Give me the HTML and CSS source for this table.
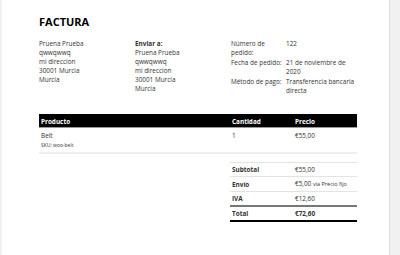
FILE: index.html
```html
<!DOCTYPE html>
<html lang="es">
<head>
<meta charset="utf-8">
<title>Factura</title>
<link rel="stylesheet" href="styles.css">
</head>
<body>
<div class="page">
  <h1 class="title">FACTURA</h1>
  <div class="addresses">
    <div class="addr">
      <div>Pruena Prueba</div>
      <div>qwwqwwq</div>
      <div>mi direccion</div>
      <div>30001 Murcia</div>
      <div>Murcia</div>
    </div>
    <div class="addr">
      <div class="label">Enviar a:</div>
      <div>Pruena Prueba</div>
      <div>qwwqwwq</div>
      <div>mi direccion</div>
      <div>30001 Murcia</div>
      <div>Murcia</div>
    </div>
    <div class="order">
      <div class="k">Número de pedido:</div><div class="v">122</div>
      <div class="k">Fecha de pedido:</div><div class="v">21 de noviembre de 2020</div>
      <div class="k">Método de pago:</div><div class="v">Transferencia bancaria directa</div>
    </div>
  </div>

  <table class="items">
    <thead>
      <tr><th class="c-prod">Producto</th><th class="c-qty">Cantidad</th><th class="c-price">Precio</th></tr>
    </thead>
    <tbody>
      <tr>
        <td class="c-prod"><div class="name">Belt</div><div class="sku">SKU: woo-belt</div></td>
        <td class="c-qty">1</td>
        <td class="c-price">€55,00</td>
      </tr>
    </tbody>
  </table>

  <div class="totals-wrap">
    <table class="totals">
      <tr><th>Subtotal</th><td>€55,00</td></tr>
      <tr><th>Envío</th><td>€5,00 <small>vía Precio fijo</small></td></tr>
      <tr class="tax"><th>IVA</th><td>€12,60</td></tr>
      <tr class="total"><th>Total</th><td><strong>€72,60</strong></td></tr>
    </table>
  </div>
</div>
</body>
</html>
```

FILE: styles.css
```css
html, body {
  margin: 0;
  padding: 0;
}
body {
  background: #f1f1f1;
  font-family: "Open Sans", "DejaVu Sans", sans-serif;
  color: #333;
  font-size: 6.4px;
  line-height: 9px;
}
.page {
  box-sizing: border-box;
  margin-left: 2px;
  width: 388px;
  min-height: 255px;
  background: #fff;
  border-right: 1px solid #dcdcdc;
  padding: 14px 32px 0 37px;
}
.title {
  margin: 0;
  font-size: 11px;
  line-height: 16px;
  font-weight: 700;
  color: #000;
}
.addresses {
  display: grid;
  grid-template-columns: 96px 96px 1fr;
  margin-top: 9px;
}
.label {
  font-weight: 700;
}
.order {
  display: grid;
  grid-template-columns: 53px 74px;
  column-gap: 2px;
  row-gap: 1px;
}
.items {
  width: 100%;
  border-collapse: collapse;
  margin-top: 19px;
}
.items th {
  background: #000;
  color: #fff;
  font-weight: 700;
  text-align: left;
  padding: 3px 2px 1px;
  line-height: 9px;
  border-bottom: 1px solid #999;
}
.items td {
  text-align: left;
  vertical-align: top;
  padding: 3px 2px 3px;
  border-bottom: 2px solid #eee;
}
.c-qty { width: 59px; }
.c-price { width: 60px; }
.name {
  line-height: 9px;
}
.sku {
  font-size: 5px;
  line-height: 8px;
  margin-top: 1px;
}
.totals-wrap {
  display: flex;
  justify-content: flex-end;
  margin-top: 8px;
}
.totals {
  width: 127px;
  border-collapse: collapse;
  border-top: 1px solid #e3e3e3;
}
.totals th, .totals td {
  text-align: left;
  padding: 2px;
  line-height: 9px;
  border-bottom: 1px solid #e3e3e3;
}
.totals th {
  font-weight: 700;
  width: 59px;
}
.totals small {
  font-size: 5.5px;
}
.totals .tax th, .totals .tax td {
  border-bottom: 2px solid #777;
}
.totals .total th, .totals .total td {
  border-bottom: 2px solid #000;
}
```
